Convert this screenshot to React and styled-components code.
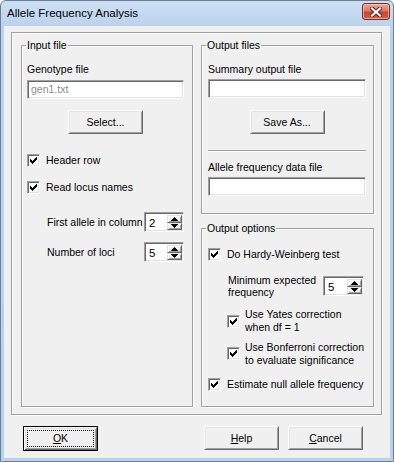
import React from 'react';
import styled, { createGlobalStyle } from 'styled-components';

const Global = createGlobalStyle`
  html, body { margin: 0; padding: 0; background: #ffffff; }
  body { width: 394px; height: 462px; overflow: hidden; }
  * { box-sizing: border-box; }
`;

const Window = styled.div`
  width: 394px;
  height: 462px;
  display: flex;
  flex-direction: column;
  border: 1px solid #6b7f99;
  border-radius: 6px 6px 0 0;
  background: linear-gradient(#cddff3 0px, #bcd3ed 25px, #b9d1ea 100%);
  font-family: "Liberation Sans", Arial, sans-serif;
  font-size: 10.5px;
  color: #000;
`;

const TitleBar = styled.div`
  height: 25px;
  flex: none;
  display: flex;
  align-items: flex-start;
  padding-left: 6px;
`;

const Title = styled.div`
  font-size: 11.5px;
  line-height: 25px;
  color: #000;
`;

const CloseButton = styled.div`
  margin-left: auto;
  margin-top: 2px;
  margin-right: 3px;
  width: 28px;
  height: 17px;
  border: 1px solid #7b2b22;
  border-radius: 3px;
  background: linear-gradient(#eaa898 0%, #de7a65 45%, #c8462f 55%, #d4614a 100%);
  box-shadow: inset 0 0 0 1px rgba(255, 220, 210, 0.55);
  display: flex;
  align-items: center;
  justify-content: center;
`;

const Client = styled.div`
  flex: 1;
  margin: 0 3px 3px 3px;
  background: #f0f0f0;
  display: flex;
  flex-direction: column;
`;

const Panel = styled.div`
  flex: 1;
  margin: 6px 8px 0 7px;
  border: 1px solid #a0a0a0;
  box-shadow: inset 1px 1px #fff, 1px 1px #fff;
  padding: 12px 7px 7px 9px;
  display: grid;
  grid-template-columns: 172px 173px;
  column-gap: 8px;
`;

const Column = styled.div`
  display: flex;
  flex-direction: column;
  gap: 14px;
`;

const Group = styled.div`
  position: relative;
  border: 1px solid #a0a0a0;
  box-shadow: inset 1px 1px #fff, 1px 1px #fff;
  display: flex;
  flex-direction: column;
  align-items: flex-start;
  padding: ${(p) => p.$pad};
  flex: ${(p) => (p.$grow ? 1 : 'none')};
`;

const Legend = styled.span`
  position: absolute;
  top: -7px;
  left: 4px;
  padding: 0 1px;
  background: #f0f0f0;
  line-height: 13px;
  white-space: nowrap;
`;

const Label = styled.div`
  line-height: 13px;
  margin-top: ${(p) => p.$mt || 0}px;
  white-space: nowrap;
`;

const Edit = styled.div`
  align-self: stretch;
  height: 19px;
  margin-top: ${(p) => p.$mt || 0}px;
  background: #fff;
  border: 1px solid;
  border-color: #a0a0a0 #fff #fff #a0a0a0;
  box-shadow: inset 1px 1px #696969, inset -1px -1px #e3e3e3;
  padding: 0 3px;
  line-height: 17px;
  color: #8d8d8d;
`;

const Button = styled.div`
  width: 75px;
  height: ${(p) => (p.$default ? 25 : 24)}px;
  margin-top: ${(p) => p.$mt || 0}px;
  align-self: ${(p) => p.$align || 'auto'};
  background: #f0f0f0;
  border: 1px solid;
  border-color: ${(p) => (p.$default ? '#000' : '#fff #696969 #696969 #fff')};
  box-shadow: ${(p) =>
    p.$default
      ? 'inset 1px 1px #fff, inset -1px -1px #696969, inset 2px 2px #e3e3e3, inset -2px -2px #a0a0a0'
      : 'inset 1px 1px #e3e3e3, inset -1px -1px #a0a0a0'};
  display: flex;
  align-items: center;
  justify-content: center;
  padding: 3px;
  line-height: 13px;
  flex: none;
`;

const FocusRect = styled.div`
  flex: 1;
  align-self: stretch;
  border: 1px dotted #000;
  display: flex;
  align-items: center;
  justify-content: center;
`;

const Key = styled.span`
  text-decoration: underline;
  text-underline-offset: 1px;
`;

const CheckRow = styled.div`
  display: flex;
  align-items: center;
  gap: ${(p) => p.$gap || 6}px;
  margin-top: ${(p) => p.$mt || 0}px;
  margin-left: ${(p) => p.$indent || 0}px;
  line-height: ${(p) => p.$lh || 13}px;
`;

const Box = styled.div`
  width: 13px;
  height: 13px;
  flex: none;
  background: #fff;
  border: 1px solid;
  border-color: #a0a0a0 #fff #fff #a0a0a0;
  box-shadow: inset 1px 1px #696969, inset -1px -1px #e3e3e3;
  position: relative;
`;

const CheckSvg = styled.svg`
  display: block;
  margin: -1px;
`;

const SpinRow = styled.div`
  display: flex;
  align-items: center;
  margin-top: ${(p) => p.$mt || 0}px;
  margin-left: ${(p) => p.$indent || 0}px;
`;

const SpinLabel = styled.div`
  width: ${(p) => p.$w}px;
  line-height: ${(p) => p.$lh || 13}px;
  flex: none;
`;

const Spin = styled.div`
  width: ${(p) => p.$w || 40}px;
  height: 20px;
  flex: none;
  background: #fff;
  border: 1px solid;
  border-color: #a0a0a0 #fff #fff #a0a0a0;
  box-shadow: inset 1px 1px #696969, inset -1px -1px #e3e3e3;
  display: flex;
  padding: 2px 1px 1px 2px;
`;

const SpinValue = styled.div`
  flex: 1;
  font-size: 11.5px;
  line-height: 16px;
  padding-left: 2px;
`;

const SpinButtons = styled.div`
  width: 15px;
  display: flex;
  flex-direction: column;
`;

const SpinArrow = styled.div`
  flex: 1;
  background: #f0f0f0;
  border: 1px solid;
  border-color: #e3e3e3 #696969 #696969 #e3e3e3;
  box-shadow: inset 1px 1px #fff, inset -1px -1px #a0a0a0;
  display: flex;
  align-items: center;
  justify-content: center;
`;

const Separator = styled.div`
  align-self: stretch;
  height: 2px;
  margin-top: ${(p) => p.$mt || 0}px;
  border-top: 1px solid #a0a0a0;
  border-bottom: 1px solid #fff;
`;

const ButtonRow = styled.div`
  flex: none;
  display: flex;
  align-items: flex-start;
  padding: 11px 27px 7px 19px;
  gap: 9px;
`;

const Spacer = styled.div`
  flex: 1;
`;

const Check = () => (
  <Box>
    <CheckSvg width="13" height="13" viewBox="0 0 13 13" shapeRendering="crispEdges">
      <polygon
        fill="#000"
        points="3,5 4,5 4,6 5,6 5,7 6,7 6,6 7,6 7,5 8,5 8,4 9,4 9,3 10,3 10,6 9,6 9,7 8,7 8,8 7,8 7,9 6,9 6,10 5,10 5,9 4,9 4,8 3,8"
      />
    </CheckSvg>
  </Box>
);

const Arrow = ({ up }) => (
  <svg width="7" height="4" viewBox="0 0 7 4" shapeRendering="crispEdges">
    <polygon fill="#000" points={up ? '3.5,0 7,4 0,4' : '0,0 7,0 3.5,4'} />
  </svg>
);

const SpinBox = ({ value, w }) => (
  <Spin $w={w}>
    <SpinValue>{value}</SpinValue>
    <SpinButtons>
      <SpinArrow>
        <Arrow up />
      </SpinArrow>
      <SpinArrow>
        <Arrow />
      </SpinArrow>
    </SpinButtons>
  </Spin>
);

export default function App() {
  return (
    <>
      <Global />
      <Window>
        <TitleBar>
          <Title>Allele Frequency Analysis</Title>
          <CloseButton>
            <svg width="12" height="10" viewBox="0 0 12 10">
              <path d="M2 1.5 L10 8.5 M10 1.5 L2 8.5" stroke="#5a1a12" strokeWidth="4" strokeLinecap="square" />
              <path d="M2 1.5 L10 8.5 M10 1.5 L2 8.5" stroke="#fff" strokeWidth="2.2" strokeLinecap="square" />
            </svg>
          </CloseButton>
        </TitleBar>
        <Client>
          <Panel>
            <Group $pad="17px 8px 0 5px">
              <Legend>Input file</Legend>
              <Label>Genotype file</Label>
              <Edit $mt={4}>gen1.txt</Edit>
              <Button $mt={11} $align="center">Select...</Button>
              <CheckRow $mt={20}>
                <Check />
                <span>Header row</span>
              </CheckRow>
              <CheckRow $mt={14}>
                <Check />
                <span>Read locus names</span>
              </CheckRow>
              <SpinRow $mt={18} $indent={20}>
                <SpinLabel $w={97}>First allele in column</SpinLabel>
                <SpinBox value="2" w={40} />
              </SpinRow>
              <SpinRow $mt={10} $indent={20}>
                <SpinLabel $w={97}>Number of loci</SpinLabel>
                <SpinBox value="5" w={40} />
              </SpinRow>
            </Group>
            <Column>
              <Group $pad="17px 7px 17px 6px">
                <Legend>Output files</Legend>
                <Label>Summary output file</Label>
                <Edit $mt={3} />
                <Button $mt={12} $align="center">Save As...</Button>
                <Separator $mt={16} />
                <Label $mt={9}>Allele frequency data file</Label>
                <Edit $mt={3} />
              </Group>
              <Group $grow $pad="19px 7px 0 6px">
                <Legend>Output options</Legend>
                <CheckRow>
                  <Check />
                  <span>Do Hardy-Weinberg test</span>
                </CheckRow>
                <SpinRow $mt={13} $indent={20}>
                  <SpinLabel $w={95} $lh={12}>
                    Minimum expected
                    <br />
                    frequency
                  </SpinLabel>
                  <SpinBox value="5" w={41} />
                </SpinRow>
                <CheckRow $mt={10} $indent={19} $gap={5}>
                  <Check />
                  <span>
                    Use Yates correction
                    <br />
                    when df = 1
                  </span>
                </CheckRow>
                <CheckRow $mt={7} $indent={19} $gap={5} $lh={12.5}>
                  <Check />
                  <span>
                    Use Bonferroni correction
                    <br />
                    to evaluate significance
                  </span>
                </CheckRow>
                <CheckRow $mt={12}>
                  <Check />
                  <span>Estimate null allele frequency</span>
                </CheckRow>
              </Group>
            </Column>
          </Panel>
          <ButtonRow>
            <Button $default>
              <FocusRect>
                <span>
                  <Key>O</Key>K
                </span>
              </FocusRect>
            </Button>
            <Spacer />
            <Button>
              <span>
                <Key>H</Key>elp
              </span>
            </Button>
            <Button>
              <span>
                <Key>C</Key>ancel
              </span>
            </Button>
          </ButtonRow>
        </Client>
      </Window>
    </>
  );
}
